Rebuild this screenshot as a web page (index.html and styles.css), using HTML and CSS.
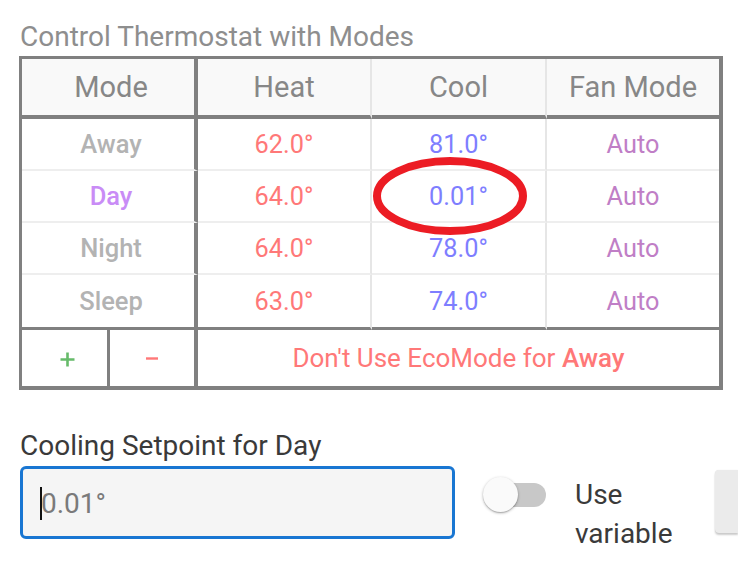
FILE: index.html
```html
<!DOCTYPE html>
<html>
<head>
<meta charset="utf-8">
<link rel="stylesheet" href="styles.css">
</head>
<body>
<div class="page">
  <h1 class="title">Control Thermostat with Modes</h1>
  <div class="modes">
    <div class="cell head c1">Mode</div>
    <div class="cell head c2">Heat</div>
    <div class="cell head c3">Cool</div>
    <div class="cell head c4">Fan Mode</div>

    <div class="cell c1 name">Away</div>
    <div class="cell c2 heat">62.0°</div>
    <div class="cell c3 cool">81.0°</div>
    <div class="cell c4 fan">Auto</div>

    <div class="cell c1 name active">Day</div>
    <div class="cell c2 heat">64.0°</div>
    <div class="cell c3 cool">0.01°</div>
    <div class="cell c4 fan">Auto</div>

    <div class="cell c1 name">Night</div>
    <div class="cell c2 heat">64.0°</div>
    <div class="cell c3 cool">78.0°</div>
    <div class="cell c4 fan">Auto</div>

    <div class="cell c1 name last">Sleep</div>
    <div class="cell c2 heat last">63.0°</div>
    <div class="cell c3 cool last">74.0°</div>
    <div class="cell c4 fan last">Auto</div>

    <div class="foot-btns">
      <div class="foot-btn add"><svg width="15" height="15" viewBox="0 0 15 15"><path d="M7.5 0.5v14M0.5 7.5h14" stroke="#66bb6a" stroke-width="2.6" fill="none"/></svg></div>
      <div class="foot-btn remove"><svg width="12" height="3" viewBox="0 0 12 3"><path d="M0 1.5h12" stroke="#ff7878" stroke-width="2.4" fill="none"/></svg></div>
    </div>
    <div class="foot-text"><span>Don't Use EcoMode for <b>Away</b></span></div>
  </div>

  <svg class="annot" width="160" height="92" viewBox="0 0 160 92">
    <ellipse cx="80" cy="46" rx="73" ry="35" fill="none" stroke="#ec1c24" stroke-width="8"/>
  </svg>

  <div class="setpoint">
    <div class="field-label">Cooling Setpoint for Day</div>
    <div class="field-row">
      <div class="input"><span class="caret"></span><span class="val">0.01°</span></div>
      <div class="switch"><span class="track"></span><span class="thumb"></span></div>
      <div class="switch-label">Use<br>variable</div>
      <div class="btn"></div>
    </div>
  </div>
</div>
</body>
</html>
```
FILE: styles.css
```css
html, body {
  margin: 0;
  padding: 0;
  background: #ffffff;
  overflow: hidden;
}
body {
  font-family: Roboto, "Liberation Sans", sans-serif;
}
.page {
  position: relative;
  width: 738px;
  height: 566px;
  overflow: hidden;
}
.title {
  margin: 0 0 3px 0;
  padding: 21px 0 0 20px;
  font-size: 28px;
  line-height: 32px;
  font-weight: 400;
  color: #8e8e8e;
}
.modes {
  margin-left: 19px;
  width: max-content;
  display: grid;
  grid-template-columns: 176px 174px 175px 172px;
  grid-template-rows: 60px 52px 52px 52px 55px 56px;
  border: 3px solid #808080;
  border-right-width: 4px;
  border-bottom-width: 4px;
}
.cell {
  box-sizing: border-box;
  display: flex;
  align-items: center;
  justify-content: center;
  font-size: 25.3px;
  border-bottom: 2px solid #eeeeee;
}
.cell.c1 {
  border-right: 4px solid #808080;
  padding-left: 6px;
}
.cell.c2, .cell.c3 { border-right: 2px solid #e6e6e6; }
.cell.head {
  background: #f9f9f9;
  border-bottom: 4px solid #808080;
  font-size: 29px;
  color: #878787;
}
.cell.last { border-bottom: 3px solid #808080; }
.name { color: #b3b3b3; font-weight: 500; font-size: 25.5px; }
.name.active { color: #c98cf6; }
.heat { color: #ff7878; }
.cool { color: #7e7eff; }
.fan { color: #c07ec6; }
.foot-btns {
  display: grid;
  grid-template-columns: 88px 84px;
  border-right: 4px solid #808080;
}
.foot-btn {
  display: flex;
  align-items: center;
  justify-content: center;
}
.foot-btn.add {
  border-right: 3px solid #808080;
  padding-top: 2px;
  padding-left: 6px;
}
.foot-btn.remove { padding-top: 1px; }
.foot-text {
  grid-column: 2 / 5;
  display: flex;
  align-items: center;
  justify-content: center;
  font-size: 26px;
  color: #ff7878;
}
.foot-text b { font-weight: 500; }
.annot {
  position: absolute;
  left: 370px;
  top: 150px;
}
.setpoint {
  margin-top: 40px;
}
.field-label {
  padding-left: 20px;
  font-size: 28px;
  line-height: 32px;
  color: #3a3a3a;
  margin-bottom: 4px;
}
.field-row {
  display: flex;
  align-items: flex-start;
}
.input {
  flex: none;
  box-sizing: border-box;
  margin-left: 20px;
  width: 435px;
  height: 73px;
  border: 3px solid #1976d2;
  border-radius: 6px;
  background: #f5f5f5;
  display: flex;
  align-items: center;
  padding-left: 17px;
  padding-top: 2px;
}
.caret {
  width: 2px;
  height: 33px;
  background: #111;
}
.val {
  font-size: 28px;
  color: #7a7a7a;
  margin-left: -1px;
}
.switch {
  flex: none;
  position: relative;
  margin-left: 28px;
  margin-top: 11px;
  width: 63px;
  height: 36px;
}
.track {
  position: absolute;
  left: 3px;
  top: 6px;
  width: 60px;
  height: 24px;
  border-radius: 12px;
  background: #c8c8c8;
}
.thumb {
  position: absolute;
  left: 0;
  top: 0;
  width: 35px;
  height: 35px;
  border-radius: 50%;
  background: #fafafa;
  box-shadow: 0 1px 3px rgba(0,0,0,0.3), 0 1px 1px rgba(0,0,0,0.14);
}
.switch-label {
  flex: none;
  margin-left: 29px;
  margin-top: 9px;
  width: 111px;
  font-size: 28px;
  line-height: 39px;
  color: #3a3a3a;
}
.btn {
  flex: none;
  margin-left: 29px;
  margin-top: 4px;
  width: 23px;
  height: 63px;
  border-radius: 4px 0 0 4px;
  background: #ebebeb;
  box-shadow: 0 2px 2px rgba(0,0,0,0.2), 0 0 1px rgba(0,0,0,0.12);
}
```
